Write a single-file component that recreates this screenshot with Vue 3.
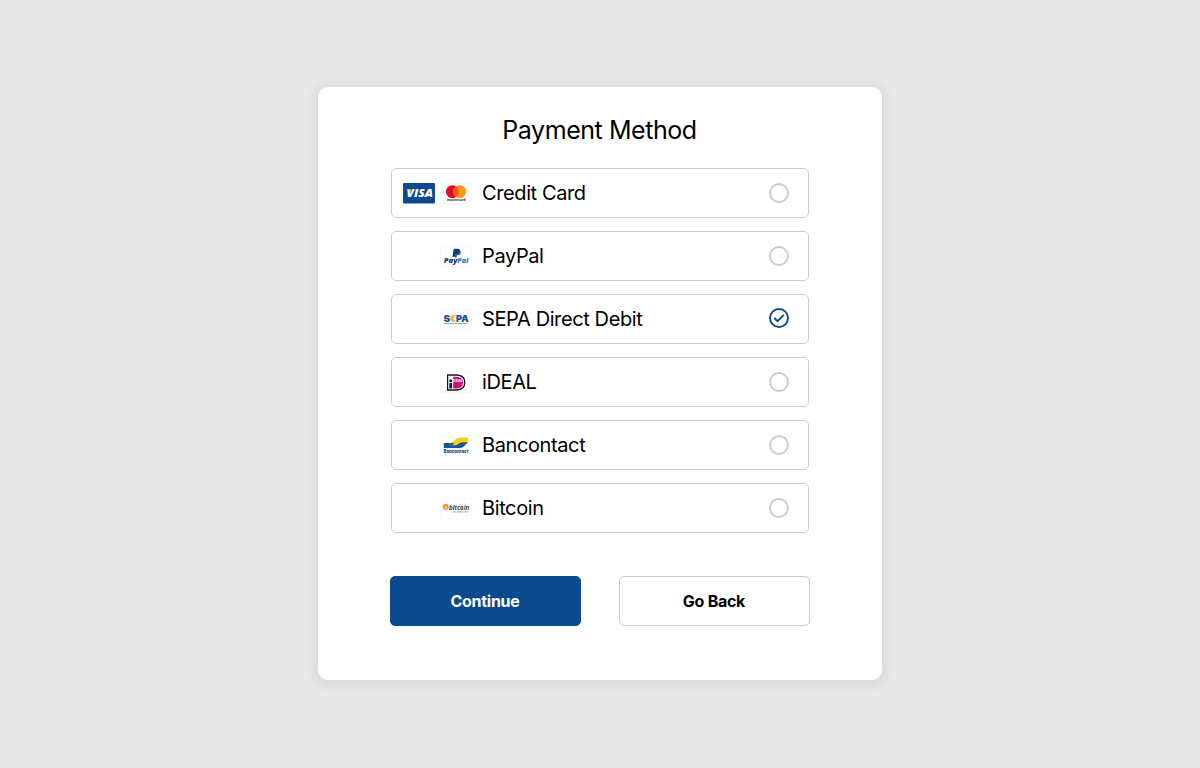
<script setup>
import { ref } from 'vue'

const selected = ref('sepa')
const methods = [
  { id: 'card', label: 'Credit Card' },
  { id: 'paypal', label: 'PayPal' },
  { id: 'sepa', label: 'SEPA Direct Debit' },
  { id: 'ideal', label: 'iDEAL' },
  { id: 'bancontact', label: 'Bancontact' },
  { id: 'bitcoin', label: 'Bitcoin' },
]
</script>

<template>
  <main class="page">
    <section class="card">
      <h1 class="title">Payment Method</h1>
      <ul class="methods">
        <li v-for="m in methods" :key="m.id" class="method" @click="selected = m.id">
          <span class="logos">
            <svg v-if="m.id === 'card'" class="logo" viewBox="0 0 32 21">
              <rect width="32" height="20.400" rx="1.200" fill="#0d4a91" />
              <text x="3.600" y="14" textLength="26.400" lengthAdjust="spacingAndGlyphs" class="logotype heavy slant" font-size="11" fill="#fff">VISA</text>
              <path d="M3.400 6h3.400q1 .1 1.200 1.100l.7 3Q7.200 7.300 3.400 6z" fill="#e9b64d" />
            </svg>
            <svg class="logo" viewBox="0 0 32 21">
              <rect x=".5" y=".5" width="31" height="20" rx="1" fill="#fff" stroke="#f8f8f8" />
              <g v-if="m.id === 'card'">
                <circle cx="12.400" cy="8.700" r="6.500" fill="#e60a22" />
                <circle cx="19.700" cy="8.700" r="6.500" fill="#f79a20" />
                <path d="M16.050 3.300a6.500 6.500 0 0 1 0 10.800a6.500 6.500 0 0 1 0-10.800z" fill="#f45b12" />
                <text x="7" y="17.800" textLength="18.500" lengthAdjust="spacingAndGlyphs" class="bold" font-size="3.200" fill="#333">mastercard</text>
              </g>
              <g v-else-if="m.id === 'paypal'">
                <path d="M13.800 2.700h3.800q3 .2 2.400 3-.6 2.700-3.500 2.700h-1.200l-.5 2.300h-2.400z" fill="#1d3473" />
                <path d="M20.200 4.900q1 1 .5 2.400-.6 2-2.900 2h-.8l-.5 2.300h-2l.8-3.300h1.400q2.900 0 3.500-3.400z" fill="#245c9c" />
                <text x="3.800" y="17.400" textLength="13.500" lengthAdjust="spacingAndGlyphs" class="logotype heavy slant" font-size="6.800" fill="#1d3473">Pay</text>
                <text x="17.300" y="17.400" textLength="11" lengthAdjust="spacingAndGlyphs" class="logotype heavy slant" font-size="6.800" fill="#2385c2">Pal</text>
              </g>
              <g v-else-if="m.id === 'sepa'" class="heavy">
                <text x="3.400" y="12.700" textLength="6.600" lengthAdjust="spacingAndGlyphs" font-size="9.200" fill="#17518f">S</text>
                <text x="9.800" y="12.700" textLength="6.400" lengthAdjust="spacingAndGlyphs" font-size="9.200" fill="#f0b323">€</text>
                <text x="16" y="12.700" textLength="12.600" lengthAdjust="spacingAndGlyphs" font-size="9.200" fill="#17518f">PA</text>
                <path d="M4 14.500h24" stroke="#7fa5c8" stroke-width="1" stroke-dasharray="5 .4 3 .3" />
              </g>
              <g v-else-if="m.id === 'ideal'">
                <path d="M7.600 3h9.200q8 .4 8 7.500t-8 7.500H7.600z" fill="#fff" stroke="#1c1519" stroke-width="1.300" />
                <path d="M13.200 4.800h3.600q6.200.2 6.200 5.700t-6.200 5.900h-3.600z" fill="#d40b7c" />
                <circle cx="10.700" cy="8.700" r="1.500" fill="#1c1519" />
                <path d="M9.400 11h2.700v5.400H9.400z" fill="#1c1519" />
                <text x="13" y="10.300" textLength="9.800" lengthAdjust="spacingAndGlyphs" class="bold" font-size="3.800" fill="#fff">DEAL</text>
              </g>
              <g v-else-if="m.id === 'bancontact'">
                <path d="M3.800 8.200H12l4-1.200h12.200l-4.200 4.200q-1.600 1.700-4 1.700H3.800z" fill="#1b5595" />
                <path d="M9.500 7.800Q13 7.500 14.500 5.300 16.500 2.600 19.500 2.600h8.700v4.600h-5.700q-2.300 0-4 1.600-1.500 1.500-3.800 1.500H9.500z" fill="#f5d51c" />
                <path d="M3.800 8.200h7.400q1.800 0 2.900-.8-.4 2.900-3.600 2.900H3.800z" fill="#1b5595" />
                <text x="3.600" y="17.600" textLength="24.800" lengthAdjust="spacingAndGlyphs" class="heavy" font-size="4.800" fill="#1b5595">Bancontact</text>
              </g>
              <g v-else>
                <circle cx="5.700" cy="9" r="3.100" fill="#f28c22" />
                <text x="4.500" y="10.500" class="bold" font-size="4" fill="#fde0bd">B</text>
                <text x="9" y="11.600" textLength="20.200" lengthAdjust="spacingAndGlyphs" class="logotype bold slant" font-size="7.200" fill="#404040">bitcoin</text>
                <text x="13" y="14.600" textLength="15.500" lengthAdjust="spacingAndGlyphs" font-size="2.200" fill="#888">accepted here</text>
              </g>
            </svg>
          </span>
          <span class="label">{{ m.label }}</span>
          <svg class="radio" :class="{ on: selected === m.id }" viewBox="0 0 20 20">
            <circle cx="10" cy="10" r="9" />
            <path v-if="selected === m.id" d="M5.300 10l3.300 3.200 6.200-6.300" />
          </svg>
        </li>
      </ul>
      <div class="actions">
        <button class="btn primary">Continue</button>
        <button class="btn">Go Back</button>
      </div>
    </section>
  </main>
</template>

<style>
body { background: #e8e8e8; }
</style>

<style scoped>
.page {
  box-sizing: border-box;
  height: 768px;
  padding-top: 87px;
  font-family: Inter, "Liberation Sans", sans-serif;
  color: #000;
}
.card {
  box-sizing: border-box;
  width: 564px;
  height: 593px;
  margin: 0 auto;
  padding: 27px 72px 0;
  border-radius: 10px;
  background: #fff;
  box-shadow: 0 2px 8px 6px rgba(0, 0, 0, .047);
}
.title {
  margin: 0 0 22px;
  font-size: 25px;
  line-height: 32px;
  font-weight: 400;
  letter-spacing: -.44px;
  text-align: center;
  text-indent: -1px;
}
.methods {
  display: grid;
  gap: 13px;
  margin: 0 1px;
  padding: 0;
  list-style: none;
}
.method {
  box-sizing: border-box;
  display: flex;
  align-items: center;
  height: 50px;
  padding: 0 19px 0 11px;
  border: 1px solid #cdcdcd;
  border-radius: 5px;
}
.logos {
  display: flex;
  justify-content: flex-end;
  gap: 5px;
  width: 69px;
  margin-right: 10px;
}
.logo { width: 32px; height: 21px; }
.logotype { font-family: "Open Sans", sans-serif; }
.heavy { font-weight: 900; }
.bold { font-weight: 700; }
.slant { font-style: italic; }
.label {
  flex: 1;
  font-size: 20px;
  line-height: 28px;
  letter-spacing: -.39px;
}
.radio {
  width: 20px;
  height: 20px;
  fill: none;
  stroke: #cbcbcb;
  stroke-width: 1.9;
}
.radio.on { stroke: #0b4a8c; margin-top: -2px; }
.actions {
  display: flex;
  justify-content: space-between;
  margin-top: 43px;
}
.btn {
  box-sizing: border-box;
  width: 191px;
  height: 50px;
  padding: 0 1px 0 0;
  border: 1px solid #cdcdcd;
  border-radius: 5px;
  background: #fff;
  color: #000;
  font: 700 16px/24px Inter, "Liberation Sans", sans-serif;
  letter-spacing: -.27px;
}
.primary { border-color: #0b4a8c; background: #0b4a8c; color: #fff; }
</style>
